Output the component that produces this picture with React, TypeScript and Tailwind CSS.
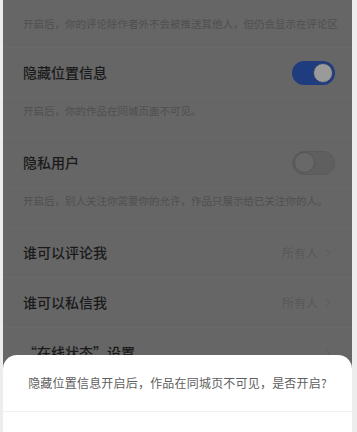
import { ChevronRight } from "lucide-react";

const font = { fontFamily: '"Noto Sans CJK SC", "Noto Sans", sans-serif' };

function Desc({ text, top }: { text: string; top?: boolean }) {
  return (
    <div
      className={
        top
          ? "h-[48px] flex items-center px-[20px] border-b border-[#6a6a6a]"
          : "h-[40px] pt-[6px] px-[20px] border-b border-[#6a6a6a]"
      }
    >
      <p className="text-[10.5px] leading-[14px] text-[#4f4f4f] whitespace-nowrap">{text}</p>
    </div>
  );
}

function Toggle({ on }: { on: boolean }) {
  return on ? (
    <div className="w-[43px] h-[24px] rounded-full bg-[#1f3c7e] flex items-center justify-end pr-[2px]">
      <div className="w-[20px] h-[20px] rounded-full bg-[#9a9a9a] border border-[#33446b]" />
    </div>
  ) : (
    <div className="w-[43px] h-[24px] rounded-full bg-[#5f5f5f] border border-[#5a5a5a] flex items-center pl-[1px]">
      <div className="w-[21px] h-[21px] rounded-full bg-[#686868] border border-[#555555]" />
    </div>
  );
}

function Row({ title, right }: { title: string; right?: React.ReactNode }) {
  return (
    <div className="h-[50px] flex items-center justify-between pl-[20px] pr-[17px] border-b border-[#6a6a6a]">
      <span className="text-[14px] font-medium text-[#1a1a1a]">{title}</span>
      {right}
    </div>
  );
}

function Value({ text }: { text: string }) {
  return (
    <div className="flex items-center gap-[3px] text-[#585858]">
      <span className="text-[12px]">{text}</span>
      <ChevronRight size={14} strokeWidth={1.5} />
    </div>
  );
}

export default function App() {
  return (
    <div className="w-[357px] h-[432px] bg-[#ededed] flex overflow-hidden" style={font}>
      <div className="ml-[3px] w-[349px] h-full bg-[#666666] flex flex-col relative">
        <Desc top text="开启后，你的评论除作者外不会被推送其他人，但仍会显示在评论区" />
        <Row title="隐藏位置信息" right={<Toggle on />} />
        <Desc text="开启后，你的作品在同城页面不可见。" />
        <Row title="隐私用户" right={<Toggle on={false} />} />
        <Desc text="开启后，别人关注你需要你的允许，作品只展示给已关注你的人。" />
        <Row title="谁可以评论我" right={<Value text="所有人" />} />
        <Row title="谁可以私信我" right={<Value text="所有人" />} />
        <Row
          title="“在线状态”设置"
          right={<ChevronRight size={14} strokeWidth={1.5} className="text-[#585858]" />}
        />
        <div className="absolute left-0 right-0 top-[355px] bottom-0 bg-white rounded-t-[14px] flex flex-col">
          <div className="h-[57px] flex items-center justify-center border-b border-[#f0f0f0]">
            <p className="text-[12px] text-[#5e5e5e] tracking-[0.2px] whitespace-nowrap">
              隐藏位置信息开启后，作品在同城页不可见，是否开启?
            </p>
          </div>
        </div>
      </div>
    </div>
  );
}
